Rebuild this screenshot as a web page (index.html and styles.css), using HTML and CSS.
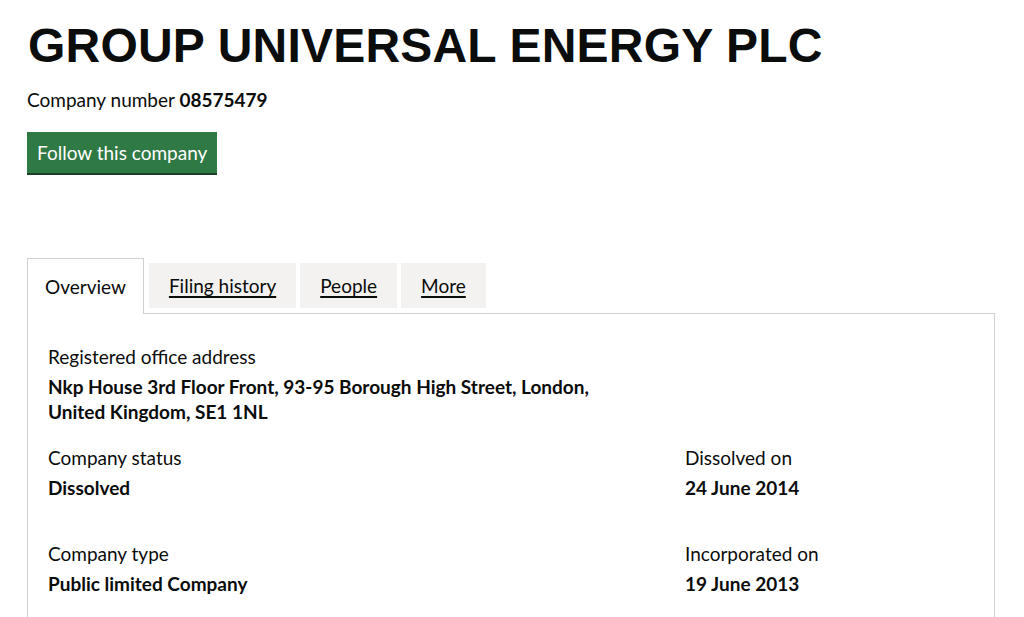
FILE: index.html
```html
<!DOCTYPE html>
<html lang="en-GB">
<head>
  <meta charset="UTF-8" />
  <meta name="viewport" content="width=device-width, initial-scale=1.0" />
  <title>GROUP UNIVERSAL ENERGY PLC - Overview</title>
  <link rel="stylesheet" href="styles.css">
</head>
<body>
  <main class="page">
    <h1 class="company-name">GROUP UNIVERSAL ENERGY PLC</h1>
    <p class="company-number">Company number <strong>08575479</strong></p>
    <a href="#" class="button">Follow this company</a>

    <div class="tabs">
      <ul class="tab-list">
        <li class="tab selected"><span>Overview</span></li>
        <li class="tab"><a href="#">Filing history</a></li>
        <li class="tab"><a href="#">People</a></li>
        <li class="tab"><a href="#">More</a></li>
      </ul>

      <div class="panel">
        <dl class="address">
          <dt>Registered office address</dt>
          <dd>Nkp House 3rd Floor Front, 93-95 Borough High Street, London, United Kingdom, SE1 1NL</dd>
        </dl>

        <div class="details">
          <dl class="item">
            <dt>Company status</dt>
            <dd>Dissolved</dd>
          </dl>
          <dl class="item">
            <dt>Dissolved on</dt>
            <dd>24 June 2014</dd>
          </dl>
          <dl class="item">
            <dt>Company type</dt>
            <dd>Public limited Company</dd>
          </dl>
          <dl class="item">
            <dt>Incorporated on</dt>
            <dd>19 June 2013</dd>
          </dl>
        </div>
      </div>
    </div>
  </main>
</body>
</html>
```
FILE: styles.css
```css
* { box-sizing: border-box; }
html, body {
  margin: 0;
  padding: 0;
  background: #fff;
  color: #0b0c0c;
  font-family: Lato, "Liberation Sans", sans-serif;
  font-size: 19px;
  line-height: 25px;
}
.page {
  padding: 21px 29px 0 27px;
}
.company-name {
  margin: 0 0 16px 1px;
  font-family: "Liberation Sans", Arial, sans-serif;
  font-size: 48px;
  line-height: 50px;
  font-weight: 700;
  letter-spacing: 0.2px;
}
.company-number {
  margin: 0 0 20px;
}
.company-number strong { font-weight: 700; }
.button {
  display: inline-block;
  padding: 8px 10px;
  background: #2f7944;
  color: #fff;
  text-decoration: none;
  box-shadow: 0 2px 0 #1c3f26;
}

.tabs { margin-top: 85px; }
.tab-list {
  display: flex;
  align-items: flex-start;
  gap: 4px;
  margin: 0;
  padding: 0;
  list-style: none;
}
.tab {
  margin-top: 5px;
  padding: 10px 20px;
  background: #f3f2f1;
}
.tab a {
  color: #0b0c0c;
  text-decoration: underline;
  text-decoration-thickness: 2px;
  text-underline-offset: 3px;
}
.tab.selected {
  position: relative;
  margin: 0 1px -1px 0;
  padding: 15px 17px;
  background: #fff;
  border: 1px solid #d0d0d0;
  border-bottom: 0;
  z-index: 1;
}
.panel {
  border: 1px solid #d0d0d0;
  padding: 30px 20px 40px;
}
dl, dd { margin: 0; }
dd { margin-top: 5px; font-weight: 700; }
.address dd { max-width: 590px; }
.details {
  display: grid;
  grid-template-columns: 637px 1fr;
  row-gap: 41px;
  margin-top: 21px;
}
```
